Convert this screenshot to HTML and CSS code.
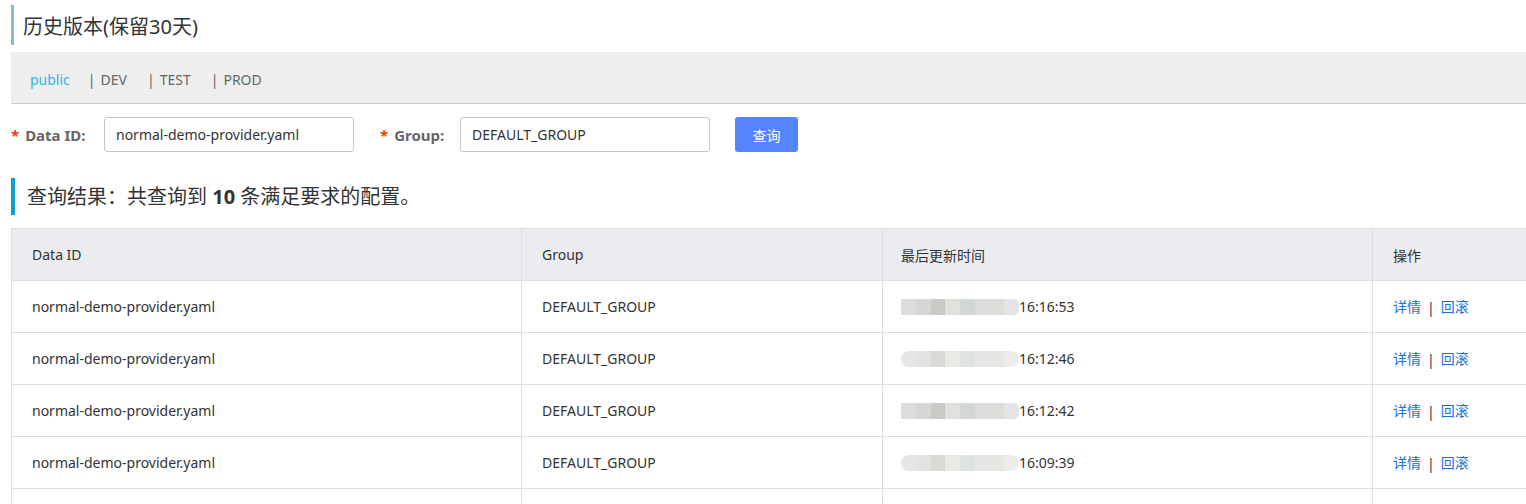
FILE: index.html
```html
<!DOCTYPE html>
<html lang="zh-CN">
<head>
<meta charset="utf-8">
<title>历史版本</title>
<link rel="stylesheet" href="styles.css">
</head>
<body>
<div class="page">
  <h1 class="page-title">历史版本(保留30天)</h1>
  <div class="ns-bar">
    <span class="ns active">public</span>
    <span class="ns"><span class="sep">|</span>DEV</span>
    <span class="ns"><span class="sep">|</span>TEST</span>
    <span class="ns"><span class="sep">|</span>PROD</span>
  </div>
  <div class="search-form">
    <label class="form-label"><span class="req">*</span>Data ID:</label>
    <input class="text-input" type="text" value="normal-demo-provider.yaml">
    <label class="form-label label-group"><span class="req">*</span>Group:</label>
    <input class="text-input" type="text" value="DEFAULT_GROUP">
    <button class="btn-primary">查询</button>
  </div>
  <h2 class="result-title">查询结果：共查询到 <b>10</b> 条满足要求的配置。</h2>
  <table class="data-table">
    <colgroup>
      <col class="c1"><col class="c2"><col class="c3"><col class="c4">
    </colgroup>
    <thead>
      <tr><th>Data ID</th><th>Group</th><th>最后更新时间</th><th>操作</th></tr>
    </thead>
    <tbody>
      <tr>
        <td>normal-demo-provider.yaml</td><td>DEFAULT_GROUP</td>
        <td><span class="blur"><i class="b1"></i><i class="b2"></i><i class="b3"></i><i class="b4"></i><i class="b5"></i><i class="b6"></i><i class="b7"></i><i class="b8"></i></span>16:16:53</td>
        <td><a class="link">详情</a><span class="pipe">|</span><a class="link">回滚</a></td>
      </tr>
      <tr>
        <td>normal-demo-provider.yaml</td><td>DEFAULT_GROUP</td>
        <td><span class="blur soft"><i class="b1"></i><i class="b2"></i><i class="b3"></i><i class="b4"></i><i class="b5"></i><i class="b6"></i><i class="b7"></i><i class="b8"></i></span>16:12:46</td>
        <td><a class="link">详情</a><span class="pipe">|</span><a class="link">回滚</a></td>
      </tr>
      <tr>
        <td>normal-demo-provider.yaml</td><td>DEFAULT_GROUP</td>
        <td><span class="blur"><i class="b1"></i><i class="b2"></i><i class="b3"></i><i class="b4"></i><i class="b5"></i><i class="b6"></i><i class="b7"></i><i class="b8"></i></span>16:12:42</td>
        <td><a class="link">详情</a><span class="pipe">|</span><a class="link">回滚</a></td>
      </tr>
      <tr>
        <td>normal-demo-provider.yaml</td><td>DEFAULT_GROUP</td>
        <td><span class="blur soft"><i class="b1"></i><i class="b2"></i><i class="b3"></i><i class="b4"></i><i class="b5"></i><i class="b6"></i><i class="b7"></i><i class="b8"></i></span>16:09:39</td>
        <td><a class="link">详情</a><span class="pipe">|</span><a class="link">回滚</a></td>
      </tr>
      <tr>
        <td></td><td></td><td></td><td></td>
      </tr>
    </tbody>
  </table>
</div>
</body>
</html>
```

FILE: styles.css
```css
* { box-sizing: border-box; }
html, body {
  margin: 0;
  padding: 0;
  overflow: hidden;
  background: #fff;
}
body {
  font-family: "Noto Sans", "Noto Sans CJK SC", sans-serif;
  color: #333;
  font-size: 14px;
}
.page {
  padding: 5px 0 0 11px;
  width: 1545px;
}
.page-title {
  margin: 0;
  height: 40px;
  border-left: 3px solid #88b7e0;
  padding: 3px 0 0 9px;
  font-size: 20px;
  font-weight: normal;
  color: #333;
  line-height: 37px;
}
.ns-bar {
  margin-top: 7px;
  height: 52px;
  background: #eeeeee;
  border-bottom: 1px solid #cccccc;
  display: flex;
  align-items: center;
  padding-left: 19px;
  padding-top: 4px;
  font-size: 14px;
}
.ns {
  color: #666;
  margin-right: 20px;
}
.ns.active { color: #33b6e4; margin-right: 18px; }
.sep { margin-right: 5px; color: #666; }
.search-form {
  display: flex;
  align-items: center;
  height: 35px;
  margin-top: 13px;
}
.form-label {
  font-weight: bold;
  color: #666;
  font-size: 15px;
  width: 93px;
  white-space: nowrap;
}
.label-group { width: 80px; margin-left: 26px; }
.req { color: #ee4400; margin-right: 6px; }
.text-input {
  width: 250px;
  height: 35px;
  border: 1px solid #c4c6cf;
  border-radius: 3px;
  padding: 0 11px;
  font-family: "Noto Sans", "Noto Sans CJK SC", sans-serif;
  font-size: 14px;
  color: #333;
  outline: none;
}
.btn-primary {
  margin-left: 25px;
  width: 63px;
  height: 35px;
  border: none;
  border-radius: 3px;
  background: #5584ff;
  color: #fff;
  font-family: "Noto Sans CJK SC", sans-serif;
  font-size: 14px;
}
.result-title {
  margin: 26px 0 0 0;
  height: 37px;
  line-height: 37px;
  border-left: 4px solid #0aa0d2;
  padding-left: 12px;
  font-size: 20px;
  font-weight: normal;
  color: #333;
}
.result-title b { font-weight: bold; }
.data-table {
  margin-top: 13px;
  border-collapse: collapse;
  width: 1530px;
  table-layout: fixed;
  font-size: 14px;
}
.c1 { width: 510px; }
.c2 { width: 361px; }
.c3 { width: 490px; }
.c4 { width: 169px; }
.data-table th, .data-table td {
  border: 1px solid #dcdee3;
  height: 52px;
  padding: 0 0 0 20px;
  text-align: left;
  font-weight: normal;
  color: #333;
  white-space: nowrap;
}
.data-table th { background: #ebecf0; }
.data-table td:nth-child(3), .data-table th:nth-child(3) { padding-left: 18px; }
.blur {
  display: inline-flex;
  vertical-align: middle;
  height: 16px;
  width: 118px;
  position: relative;
  top: -1px;
  border-radius: 0 6px 6px 0;
  overflow: hidden;
}
.blur i { flex: 1; height: 100%; }
.b1 { background: #dcdcdc; }
.b2 { background: #d6d6d8; }
.b3 { background: #cbc9c6; }
.b4 { background: #e0e0dc; }
.b5 { background: #d2d6d6; }
.b6 { background: #dcdcdc; }
.b7 { background: #dcdcd8; }
.b8 { background: #e4e4e6; }
.blur.soft { border-radius: 8px; opacity: 0.7; }
.link { color: #1a6fd8; cursor: pointer; position: relative; top: -1px; }
.pipe { color: #333; margin: 0 6px; }
```
